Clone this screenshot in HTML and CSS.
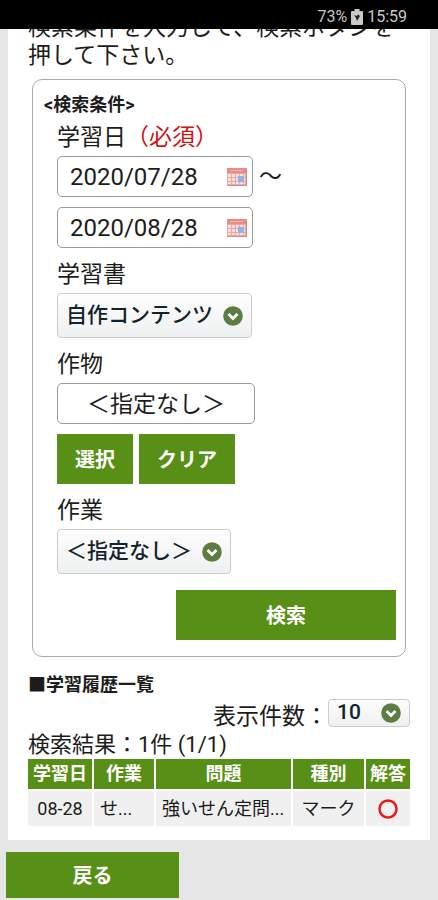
FILE: index.html
```html
<!DOCTYPE html>
<html lang="ja">
<head>
<meta charset="utf-8">
<meta name="viewport" content="width=device-width, initial-scale=1">
<title>学習履歴</title>
<link rel="stylesheet" href="styles.css">
</head>
<body>
<svg width="0" height="0" class="sprite" aria-hidden="true">
  <symbol id="calendar" viewBox="0 0 20 20">
    <rect x="0" y="1" width="20" height="18" rx="1" fill="#eda9a5"/>
    <rect x="0" y="1" width="20" height="5" rx="1" fill="#e58d86"/>
    <rect x="1" y="7" width="17" height="10" fill="#f9dedc"/>
    <path d="M4.500 7v10M8.500 7v10M12.500 7v10M16.500 7v10M1 10.500h17M1 14.500h17" stroke="#eba9a6" fill="none"/>
    <rect x="11" y="9" width="6" height="6" fill="#8fb4e6"/>
    <path d="M0 18.500h20M19.500 3v15" stroke="#cf8c85" fill="none"/>
    <path d="M3 3.500h13" stroke="#f1b3ac" fill="none"/>
  </symbol>
  <symbol id="chevron" viewBox="0 0 20 20">
    <circle cx="10" cy="10" r="9.800" fill="#5c7d42"/>
    <path d="M5.500 8l4.500 4.500L14.500 8" fill="none" stroke="#fff" stroke-width="2.800"/>
  </symbol>
</svg>
<header class="status">
  <span>73%</span>
  <svg class="battery" viewBox="0 0 12 16" aria-hidden="true"><path d="M3.500 0h5v2H11q1 0 1 1v12q0 1-1 1H1q-1 0-1-1V3q0-1 1-1h2.500z" fill="#c9c9c9"/><path d="M3 6l2.500 1L7 5.500 9 7l-3 5-1-3z" fill="#222"/></svg>
  <span>15:59</span>
</header>
<main class="panel">
  <p class="intro">検索条件を入力して、検索ボタンを押して下さい。</p>
  <form class="search">
    <h2 class="heading">&lt;検索条件&gt;</h2>
    <div class="fields">
      <label class="label" for="from">学習日<span class="required">（必須）</span></label>
      <div class="dates">
        <div class="range">
          <span class="date"><input id="from" type="text" value="2020/07/28"><svg class="icon"><use href="#calendar"/></svg></span>
          <span>～</span>
        </div>
        <span class="date"><input type="text" value="2020/08/28" aria-label="学習日"><svg class="icon"><use href="#calendar"/></svg></span>
      </div>
      <label class="label" for="book">学習書</label>
      <span class="picker book"><select id="book"><option>自作コンテンツ</option></select><svg class="icon"><use href="#chevron"/></svg></span>
      <label class="label" for="crop">作物</label>
      <input class="crop" id="crop" type="text" value="＜指定なし＞">
      <div class="actions">
        <button class="button" type="button">選択</button>
        <button class="button" type="button">クリア</button>
      </div>
      <label class="label" for="work">作業</label>
      <span class="picker work"><select id="work"><option>＜指定なし＞</option></select><svg class="icon"><use href="#chevron"/></svg></span>
    </div>
    <button class="button submit" type="button">検索</button>
  </form>
  <h2 class="heading list-heading">■学習履歴一覧</h2>
  <div class="paging">
    <label for="count">表示件数：</label>
    <span class="picker count"><select id="count"><option>10</option></select><svg class="icon"><use href="#chevron"/></svg></span>
  </div>
  <p class="summary">検索結果：1件 (1/1)</p>
  <table class="results">
    <thead>
      <tr><th class="c-date">学習日</th><th class="c-work">作業</th><th>問題</th><th class="c-type">種別</th><th class="c-mark">解答</th></tr>
    </thead>
    <tbody>
      <tr><td class="center">08-28</td><td>せ...</td><td>強いせん定問...</td><td class="center">マーク</td><td class="center"><svg class="icon" viewBox="0 0 20 20" role="img" aria-label="正解"><circle cx="10" cy="10" r="8.500" fill="none" stroke="#f51414" stroke-width="2.500"/></svg></td></tr>
    </tbody>
  </table>
</main>
<footer class="footer"><button class="button back" type="button">戻る</button></footer>
</body>
</html>
```

FILE: styles.css
```css
* {
  box-sizing: border-box;
}

body {
  margin: 0;
  background: #e6e6e6;
  color: #1c1c1c;
  font-family: Roboto, "Noto Sans CJK JP", sans-serif;
  font-size: 23px;
  line-height: 28px;
}

input,
select,
button {
  font-family: inherit;
  color: inherit;
  margin: 0;
}

.sprite {
  position: absolute;
}

.icon {
  display: block;
  width: 20px;
  height: 20px;
  flex: none;
}

.status {
  display: flex;
  justify-content: flex-end;
  align-items: center;
  gap: 4px;
  height: 29px;
  padding: 4px 31px 0 0;
  background: #000;
  color: #c9c9c9;
  font-size: 16px;
}

.battery {
  width: 12px;
  height: 16px;
}

.panel {
  margin: 0 8px;
  padding: 0 20px 12px;
  background: #fff;
  overflow: hidden;
}

.intro {
  margin: -15px 0 9px;
}

.search {
  margin: 0 4px;
  padding: 11px 9px 16px 11px;
  border: 1px solid #a9a9a9;
  border-radius: 10px;
}

.heading {
  margin: 0;
  font-size: 18px;
  font-weight: 700;
}

.fields {
  display: flex;
  flex-direction: column;
  align-items: flex-start;
  padding: 0 13px;
}

.label {
  margin: 13px 0 4px;
}

.label:first-child {
  margin-top: 5px;
}

.required {
  color: #d01212;
}

.dates {
  display: flex;
  flex-direction: column;
  align-items: flex-start;
  gap: 10px;
}

.range {
  display: flex;
  align-items: center;
  gap: 6px;
}

.date {
  display: flex;
  align-items: center;
  width: 196px;
  height: 41px;
  padding: 0 5px 0 12px;
  border: 1px solid #999;
  border-radius: 5px;
}

.date input {
  flex: 1;
  min-width: 0;
  padding: 0;
  border: 0;
  background: none;
  font-size: 24px;
}

.picker {
  position: relative;
  display: block;
  color: #14232b;
  font-weight: 500;
}

.picker select {
  appearance: none;
  display: block;
  width: 100%;
  height: 45px;
  padding: 0 0 2px 8px;
  border: 1px solid #ccc;
  border-radius: 4px;
  background: linear-gradient(#fdfdfd, #eff0f1);
  font-size: 21px;
  font-weight: 500;
}

.picker .icon {
  position: absolute;
  right: 9px;
  top: 50%;
  margin-top: -10px;
  pointer-events: none;
}

.book {
  width: 195px;
}

.work {
  width: 174px;
}

.crop {
  width: 198px;
  height: 41px;
  padding: 0 0 4px;
  border: 1px solid #999;
  border-radius: 5px;
  background: #fff;
  font-size: 23px;
  text-align: center;
}

.actions {
  display: flex;
  gap: 6px;
  margin-top: 10px;
}

.button {
  height: 50px;
  padding: 0 17px 2px;
  border: 0;
  background: #588f16;
  color: #fff;
  font-size: 20px;
  font-weight: 700;
}

.actions .button {
  padding: 0 18px 2px;
}

.submit {
  display: block;
  width: 220px;
  margin: 16px 0 0 auto;
}

.list-heading {
  margin-top: 14px;
}

.paging {
  display: flex;
  justify-content: flex-end;
  align-items: flex-start;
}

.paging label {
  margin-top: 4px;
}

.count {
  width: 82px;
}

.count select {
  height: 28px;
}

.summary {
  margin: 0;
  font-size: 22px;
}

.results {
  table-layout: fixed;
  border-collapse: separate;
  border-spacing: 2px;
  margin: -2px -2px 0;
  width: calc(100% + 4px);
  font-size: 18px;
}

.results th {
  height: 30px;
  padding: 0;
  background: #588f16;
  color: #fff;
  font-weight: 700;
}

.results td {
  height: 35px;
  padding: 0 0 0 6px;
  background: #f0f0f0;
  white-space: nowrap;
  overflow: hidden;
}

.results .center {
  padding: 0;
  text-align: center;
}

.results .icon {
  margin: 0 auto;
}

.c-date {
  width: 64px;
}

.c-work {
  width: 60px;
}

.c-type {
  width: 71px;
}

.c-mark {
  width: 44px;
}

.footer {
  padding: 12px 6px 2px;
}

.back {
  display: block;
  width: 173px;
  height: 46px;
}
```
